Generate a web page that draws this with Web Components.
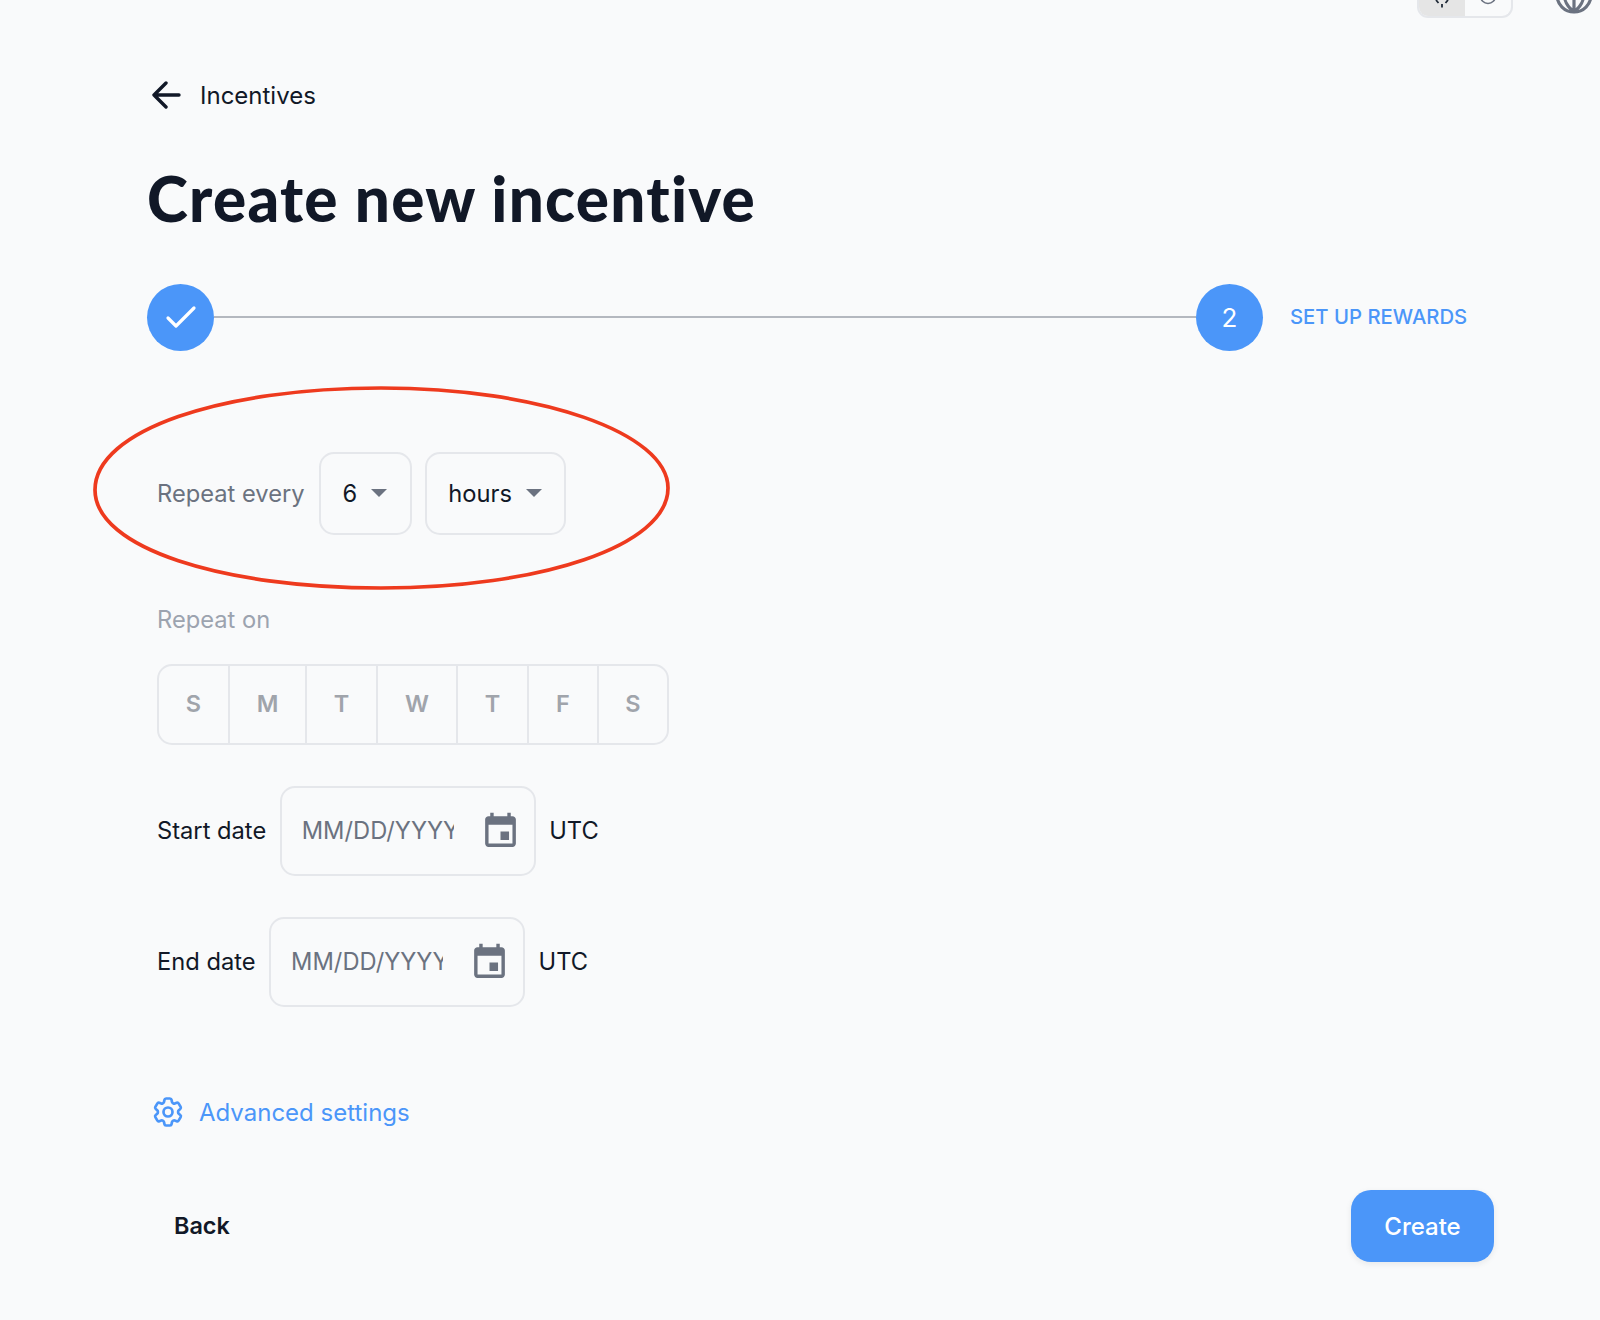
<!DOCTYPE html>
<html lang="en">
<head>
<meta charset="utf-8">
<title>Create new incentive</title>
<style>
  html, body { margin: 0; height: 100%; background: #f9fafb; }
  body { font-family: Inter, "Liberation Sans", sans-serif; color: #111827; }
</style>
</head>
<body>
<x-page>
  <x-topbar slot="top"></x-topbar>
  <x-backlink>Incentives</x-backlink>
  <x-title>Create new incentive</x-title>
  <x-stepper label="SET UP REWARDS"></x-stepper>
  <x-form>
    <x-repeat-row>
      <span slot="label">Repeat every</span>
      <x-select style="padding-right:23px">6</x-select>
      <x-select style="margin-left:-1px;padding-left:21px">hours</x-select>
    </x-repeat-row>
    <x-weekdays label="Repeat on"></x-weekdays>
    <x-date-row label="Start date" style="margin-top:41px"></x-date-row>
    <x-date-row label="End date" style="margin-top:41px"></x-date-row>
  </x-form>
  <x-advanced>Advanced settings</x-advanced>
  <x-actions></x-actions>
</x-page>

<script>
  function define(name, html, init) {
    customElements.define(name, class extends HTMLElement {
      constructor() {
        super();
        this.attachShadow({ mode: 'open' }).innerHTML = html;
      }
      connectedCallback() { if (init) init.call(this, this.shadowRoot); }
    });
  }

  define('x-page', `<style>
    :host { display: block; }
    main { padding: 0 106px 0 147px; display: flex; flex-direction: column; }
  </style><slot name="top"></slot><main><slot></slot></main>`);

  define('x-topbar', `<style>
    :host { display: flex; justify-content: flex-end; align-items: flex-start; height: 18px; overflow: hidden; padding-right: 7px; gap: 42px; }
    .toggle { display: flex; width: 96px; height: 18px; box-sizing: border-box; border: 2px solid #e5e7eb; border-top: 0; border-radius: 0 0 11px 11px; overflow: hidden; }
    .toggle > div { flex: 1; height: 100%; position: relative; display: flex; justify-content: center; align-items: flex-start; }
    .on { background: #e5e5e5; }
    svg { display: block; flex: none; }
  </style>
  <div class="toggle">
    <div class="on"><svg width="24" height="12" viewBox="0 0 24 12" fill="none" stroke="#1f2937" stroke-width="1.8"><path d="M12 4v3.5M6 0l2.500 3M18 0l-2.500 3"/></svg></div>
    <div><svg width="24" height="12" viewBox="0 0 24 12" fill="none" stroke="#6b7280" stroke-width="1.6"><circle cx="12" cy="-4" r="7.500"/></svg></div>
  </div>
  <svg width="38" height="14" viewBox="0 0 38 14" fill="none" stroke="#6b7280" stroke-width="3.200">
    <circle cx="19" cy="-5" r="17"/>
    <path d="M19 12C11 6 9 0 9-8M19 12c8-6 10-12 10-20M19 12V-8"/>
  </svg>`);

  define('x-backlink', `<style>
    :host { display: flex; align-items: center; height: 40px; margin-top: 57px; font-size: 24px; color: #111827; }
    svg { display: block; margin-left: 5px; margin-right: 19px; }
  </style>
  <svg width="29" height="28" viewBox="0 0 29 28" fill="none" stroke="#111827" stroke-width="3.400" stroke-linecap="round" stroke-linejoin="round"><path d="M14 2 2 14l12 12M2 14h25"/></svg><slot></slot>`);

  define('x-title', `<style>
    :host { display: block; margin-top: 43px; height: 80px; line-height: 80px; font-family: Lato, "Liberation Sans", sans-serif; font-weight: 900; font-size: 62px; font-variant-ligatures: none; letter-spacing: 1.250px; color: #111827; white-space: nowrap; }
  </style><slot></slot>`);

  define('x-stepper', `<style>
    :host { display: flex; align-items: center; margin-top: 46px; height: 67px; }
    .c { width: 67px; height: 67px; border-radius: 50%; background: #4b96f9; color: #fff; font-size: 26px; display: flex; align-items: center; justify-content: center; flex: none; }
    .l { width: 982px; height: 2px; margin-bottom: 2px; background: #b4b8bf; flex: none; }
    .t { margin-left: 27px; margin-bottom: 2px; color: #4b96f9; font-weight: 500; font-size: 20.3px; white-space: nowrap; }
  </style>
  <div class="c"><svg width="32" height="24" viewBox="0 0 32 24" fill="none" stroke="#fff" stroke-width="3.200" stroke-linecap="round" stroke-linejoin="round" style="margin-bottom:2px"><path d="M3 13l8 8L29 3"/></svg></div>
  <div class="l"></div>
  <div class="c">2</div>
  <div class="t"></div>`, function (r) { r.querySelector('.t').textContent = this.getAttribute('label'); });

  define('x-form', `<style>
    :host { display: block; padding-left: 10px; margin-top: 101px; }
  </style><slot></slot>`);

  define('x-repeat-row', `<style>
    :host { display: flex; align-items: center; gap: 14px; height: 83px; position: relative; font-size: 23.7px; }
    .lab { color: #6b7280; white-space: nowrap; padding-bottom: 1px; }
    svg { position: absolute; left: -65px; top: -67px; pointer-events: none; }
  </style>
  <div class="lab"><slot name="label"></slot></div><slot></slot>
  <svg width="579" height="206" viewBox="0 0 579 206" fill="none"><path d="M3 105C3 45 130 3 289 3c159 0 287 45 287 100 0 58-128 100-287 100C130 203 3 163 3 105Z" stroke="#ee3a1e" stroke-width="3.700"/></svg>`);

  define('x-select', `<style>
    :host { display: flex; align-items: center; height: 83px; box-sizing: border-box; border: 2px solid #e5e7eb; border-radius: 15px; padding: 0 22px 1px 22px; gap: 14px; font-size: 23.7px; color: #111827; }
    svg { display: block; }
  </style><slot></slot><svg width="16" height="8" viewBox="0 0 16 8"><path d="M0 0h16L8 8z" fill="#6b7280"/></svg>`);

  define('x-weekdays', `<style>
    :host { display: block; margin-top: 69px; }
    .lab { font-size: 23.7px; line-height: 32px; color: #9ca3af; }
    .g { display: grid; grid-template-columns: 69px 77px 71px 80px 71px 70px 1fr; width: 512px; height: 81px; margin-top: 28px; box-sizing: border-box; border: 2px solid #e5e7eb; border-radius: 15px; }
    .g span { display: flex; align-items: center; justify-content: center; padding-bottom: 2px; font-weight: 600; font-size: 23.500px; color: #a0a4ab; border-left: 2px solid #e5e7eb; }
    .g span:first-child { border-left: 0; }
  </style>
  <div class="lab"></div>
  <div class="g"><span>S</span><span>M</span><span>T</span><span>W</span><span>T</span><span>F</span><span>S</span></div>`,
    function (r) { r.querySelector('.lab').textContent = this.getAttribute('label'); });

  define('x-date-row', `<style>
    :host { display: flex; align-items: center; gap: 13.500px; height: 90px; font-size: 23.7px; color: #111827; }
    .lab, .utc { padding-bottom: 2px; }
    .box { width: 256px; height: 90px; box-sizing: border-box; border: 2px solid #e5e7eb; border-radius: 15px; display: flex; align-items: center; padding-left: 20px; }
    .ph { width: 152px; overflow: hidden; white-space: nowrap; color: #6b7280; flex: none; padding-bottom: 2px; }
    svg { display: block; margin-left: 26px; flex: none; }
  </style>
  <div class="lab"></div>
  <div class="box"><div class="ph">MM/DD/YYYY</div>
    <svg width="41" height="41" viewBox="0 0 24 24" fill="#6b7280"><path d="M17 12h-5v5h5v-5zM16 1v2H8V1H6v2H5c-1.110 0-1.990.9-1.990 2L3 19c0 1.100.89 2 2 2h14c1.100 0 2-.9 2-2V5c0-1.100-.9-2-2-2h-1V1h-2zm3 18H5V8h14v11z"/></svg>
  </div>
  <div class="utc">UTC</div>`, function (r) { r.querySelector('.lab').textContent = this.getAttribute('label'); });

  define('x-advanced', `<style>
    :host { display: flex; align-items: center; height: 40px; margin-top: 85px; font-size: 24px; color: #4b96f9; }
    svg { display: block; margin-left: 3px; margin-right: 13px; }
  </style>
  <svg width="36" height="36" viewBox="0 0 24 24" fill="none" stroke="#4b96f9" stroke-width="1.800" stroke-linejoin="round"><path d="M9.594 3.940c.09-.542.56-.94 1.110-.94h2.593c.55 0 1.020.398 1.110.94l.213 1.281c.063.374.313.686.645.87.074.04.147.083.22.127.325.196.72.257 1.075.124l1.217-.456a1.125 1.125 0 0 1 1.370.49l1.296 2.247a1.125 1.125 0 0 1-.26 1.431l-1.003.827c-.293.241-.438.613-.43.992a7.723 7.723 0 0 1 0 .255c-.008.378.137.75.43.991l1.004.827c.424.35.534.955.26 1.430l-1.298 2.247a1.125 1.125 0 0 1-1.369.491l-1.217-.456c-.355-.133-.75-.072-1.076.124a6.470 6.470 0 0 1-.22.128c-.331.183-.581.495-.644.869l-.213 1.281c-.09.543-.56.94-1.110.94h-2.594c-.55 0-1.019-.398-1.110-.94l-.213-1.281c-.062-.374-.312-.686-.644-.87a6.520 6.520 0 0 1-.22-.127c-.325-.196-.72-.257-1.076-.124l-1.217.456a1.125 1.125 0 0 1-1.369-.49l-1.297-2.247a1.125 1.125 0 0 1 .26-1.431l1.004-.827c.292-.24.437-.613.43-.991a6.932 6.932 0 0 1 0-.255c.007-.38-.138-.751-.43-.992l-1.004-.827a1.125 1.125 0 0 1-.26-1.430l1.297-2.247a1.125 1.125 0 0 1 1.370-.491l1.216.456c.356.133.751.072 1.076-.124.072-.044.146-.086.22-.128.332-.183.582-.495.644-.869l.214-1.280Z"/><path d="M15 12a3 3 0 1 1-6 0 3 3 0 0 1 6 0Z"/></svg><slot></slot>`);

  define('x-actions', `<style>
    :host { display: flex; justify-content: space-between; align-items: center; margin-top: 58px; height: 72px; font-size: 24px; font-weight: 500; }
    .back { padding-left: 27px; padding-bottom: 1px; color: #111827; font-weight: 600; font-size: 23.4px; }
    .create { width: 143px; height: 72px; border-radius: 20px; background: #4b96f9; color: #fff; display: flex; align-items: center; justify-content: center; box-shadow: 0 2px 6px rgba(17,24,39,.08); font-weight: 500; }
  </style><div class="back">Back</div><div class="create">Create</div>`);
</script>
</body>
</html>
